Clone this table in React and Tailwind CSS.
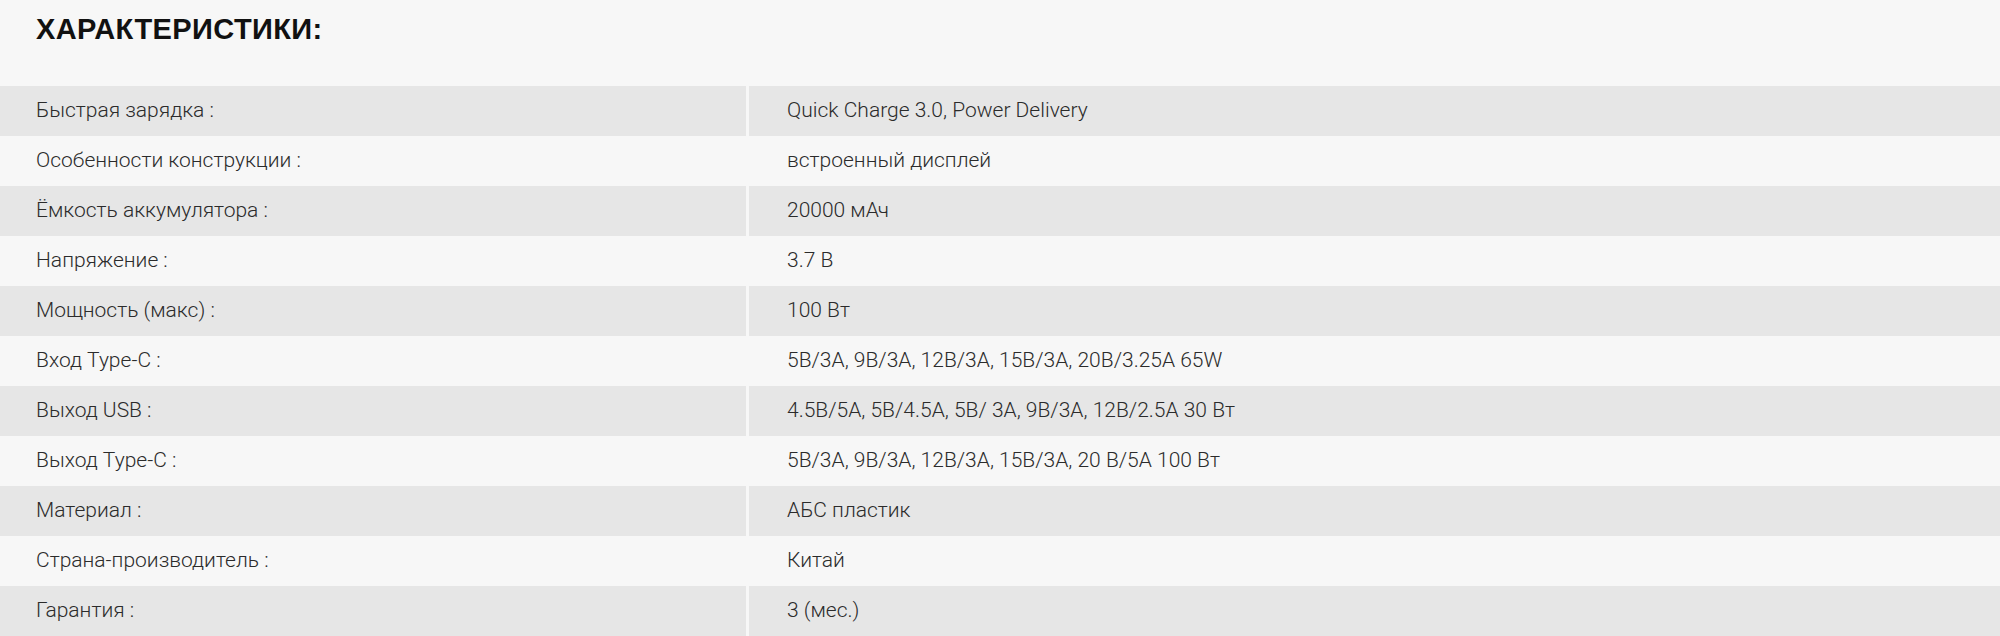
const specs = [
  ['Быстрая зарядка :', 'Quick Charge 3.0, Power Delivery'],
  ['Особенности конструкции :', 'встроенный дисплей'],
  ['Ёмкость аккумулятора :', '20000 мАч'],
  ['Напряжение :', '3.7 В'],
  ['Мощность (макс) :', '100 Вт'],
  ['Вход Type-C :', '5В/3А, 9В/3А, 12В/3А, 15В/3А, 20В/3.25А 65W'],
  ['Выход USB :', '4.5В/5А, 5В/4.5А, 5В/ 3А, 9В/3А, 12В/2.5А 30 Вт'],
  ['Выход Type-C :', '5В/3А, 9В/3А, 12В/3А, 15В/3А, 20 В/5А 100 Вт'],
  ['Материал :', 'АБС пластик'],
  ['Страна-производитель :', 'Китай'],
  ['Гарантия :', '3 (мес.)'],
];

export default function App() {
  return (
    <div className="w-[2000px] h-[636px] overflow-hidden bg-[#f7f7f7] font-['Roboto',sans-serif]">
      {/* Заголовок */}
      <div className="h-[86px] pl-[36px] pt-[13px]">
        <h2 className="text-[29px] leading-[32px] font-bold tracking-[0.4px] text-[#111] font-['Liberation_Sans',sans-serif]">
          ХАРАКТЕРИСТИКИ:
        </h2>
      </div>

      {/* Таблица */}
      <div className="flex flex-col">
        {specs.map(([label, value], i) => (
          <div
            key={label}
            className={`flex h-[50px] text-[21px] leading-[24px] font-light text-[#2b2b2b] ${
              i % 2 === 0 ? 'bg-[#e6e6e6]' : 'bg-[#f7f7f7]'
            }`}
          >
            <div className="w-[746px] h-full flex items-center pl-[36px] pb-[2px]">{label}</div>
            <div className="w-[3px] h-full bg-[#f7f7f7]" />
            <div className="flex-1 h-full flex items-center pl-[38px] pb-[2px]">{value}</div>
          </div>
        ))}
      </div>
    </div>
  );
}
